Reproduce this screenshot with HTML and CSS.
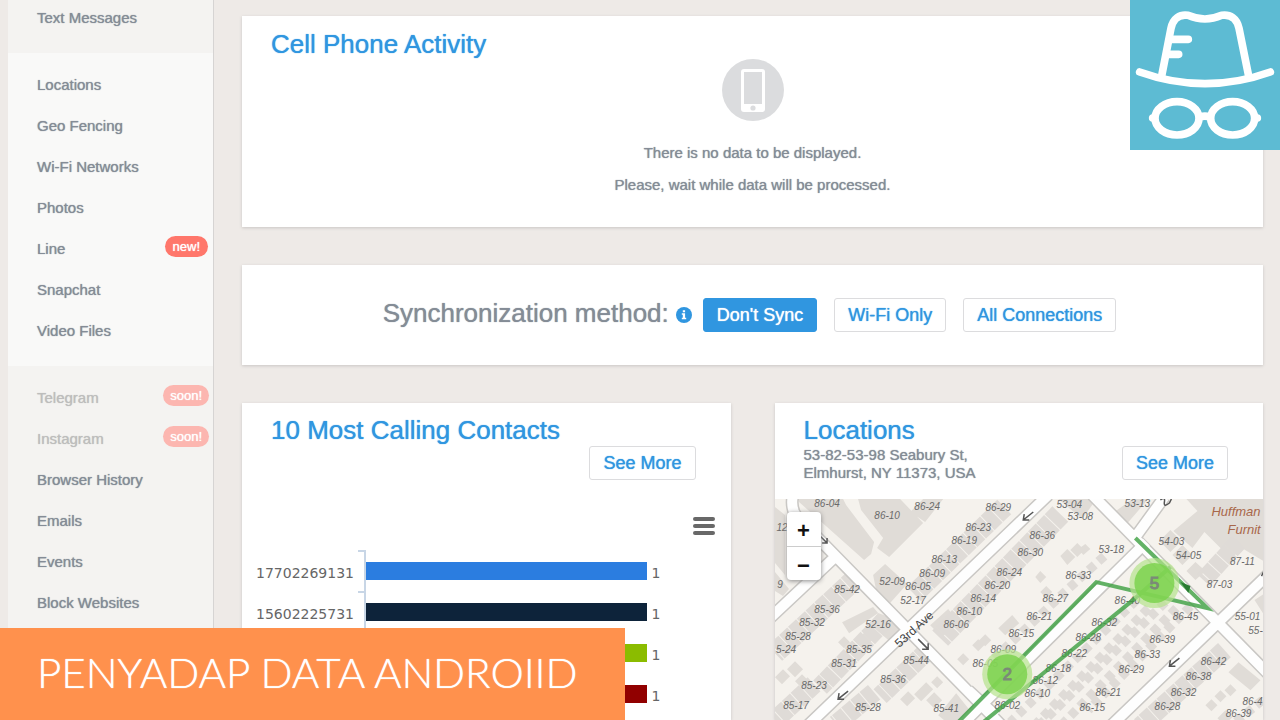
FILE: index.html
```html
<!DOCTYPE html>
<html lang="en">
<head>
<meta charset="utf-8">
<title>Cell Phone Activity</title>
<link rel="stylesheet" href="styles.css">
</head>
<body>
<div class="shell">
  <nav class="sidebar">
    <ul class="nav-group nav-group-top">
      <li><a class="nav-link" href="#">Text Messages</a></li>
    </ul>
    <ul class="nav-group nav-group-light">
      <li><a class="nav-link" href="#">Locations</a></li>
      <li><a class="nav-link" href="#">Geo Fencing</a></li>
      <li><a class="nav-link" href="#">Wi-Fi Networks</a></li>
      <li><a class="nav-link" href="#">Photos</a></li>
      <li><a class="nav-link" href="#">Line <span class="badge">new!</span></a></li>
      <li><a class="nav-link" href="#">Snapchat</a></li>
      <li><a class="nav-link" href="#">Video Files</a></li>
    </ul>
    <ul class="nav-group">
      <li><a class="nav-link nav-link-soon" href="#">Telegram <span class="badge badge-soon">soon!</span></a></li>
      <li><a class="nav-link nav-link-soon" href="#">Instagram <span class="badge badge-soon">soon!</span></a></li>
      <li><a class="nav-link" href="#">Browser History</a></li>
      <li><a class="nav-link" href="#">Emails</a></li>
      <li><a class="nav-link" href="#">Events</a></li>
      <li><a class="nav-link" href="#">Block Websites</a></li>
    </ul>
  </nav>

  <main class="main">
    <section class="card activity">
      <h2 class="title">Cell Phone Activity</h2>
      <div class="empty">
        <svg class="empty-icon" viewBox="0 0 62 62" aria-hidden="true">
          <circle cx="31" cy="31" r="31" fill="#dbdcde"/>
          <rect x="19" y="10" width="24" height="43" rx="3" fill="#fff"/>
          <rect x="22" y="13" width="18" height="32" fill="#dbdcde"/>
          <circle cx="31" cy="49" r="2.6" fill="#dbdcde"/>
        </svg>
        <p>There is no data to be displayed.</p>
        <p>Please, wait while data will be processed.</p>
      </div>
    </section>

    <section class="card sync">
      <h2 class="sync-title">Synchronization method:</h2>
      <svg class="info" viewBox="0 0 16 16" aria-hidden="true">
        <circle cx="8" cy="8" r="8" fill="#3096e0"/>
        <path d="M6.8 3.2h2.3v2H6.8zM5.8 6.3h3.3v4.5h1.1v1.5H5.8v-1.5h1V7.8h-1z" fill="#fff"/>
      </svg>
      <div class="sync-options">
        <button class="btn btn-primary" type="button">Don't Sync</button>
        <button class="btn" type="button">Wi-Fi Only</button>
        <button class="btn" type="button">All Connections</button>
      </div>
    </section>

    <div class="columns">
      <section class="card contacts">
        <h2 class="title">10 Most Calling Contacts</h2>
        <button class="btn contacts-more" type="button">See More</button>
        <button class="menu" type="button" aria-label="Chart menu"><span></span><span></span><span></span></button>
        <ul class="chart">
          <li class="chart-row"><span class="chart-label">17702269131</span><span class="tick"></span><span class="bar bar-blue"></span><span class="value">1</span></li>
          <li class="chart-row"><span class="chart-label">15602225731</span><span class="tick"></span><span class="bar bar-navy"></span><span class="value">1</span></li>
          <li class="chart-row"><span class="chart-label"></span><span class="tick"></span><span class="bar bar-green"></span><span class="value">1</span></li>
          <li class="chart-row"><span class="chart-label"></span><span class="tick"></span><span class="bar bar-red"></span><span class="value">1</span></li>
        </ul>
      </section>

      <section class="card locations">
        <h2 class="title">Locations</h2>
        <div class="place">
          <p class="address">53-82-53-98 Seabury St,<br>Elmhurst, NY 11373, USA</p>
          <button class="btn" type="button">See More</button>
        </div>
        <div class="map">
          <svg class="map-art" viewBox="775 499 488 221" preserveAspectRatio="xMinYMin slice" role="img" aria-label="Street map">
            <rect x="775" y="499" width="488" height="221" fill="#f5f2ed"/>
            <g class="blocks">
              <path d="M798 499h45l3 6 28 37-3 12-7 6-65-58zM858 499h42l23 24-34 34-12-9 6-10-22-28zM910 512l13-13h20l-18 23zM775 507l10 8v60l-10-12zM775 572l14 17-6 7-8-5zM873 575l12-11 22 20-17 19-14-13zM842 622l31-15 5 6-29 20zM860 636l12-10 20 17 14-12-6-10-22-8-10 12 10 8-14 16zM1186 499h77v62l-20-12-13 9-26-26-12 16-19-17 24-20zM1110 515l22-16h16l-26 30zM1058 499h38l-14 20zM1159 541l11-11 11 11-11 11zM1172 555l10-10 10 10-10 10zM1186 571l9-9 10 9-10 9zM1254 600l9-6v20zM930 625l12 12 16-16-10-12zM1228 672l10-10 22 18-10 10zM938 715l18-22 16 20-8 7h-20z"/>
              <path d="M775 677l8-8 7 7-8 8zM787 669l8-8 8 8-8 8zM795 681l7-7 7 7-7 7zM838 642l6-6 6 6-6 6zM900 699l8-8 7 7-8 8zM914 694l12-12 7 7-12 12zM926 700l8-8 8 8-8 8zM1060 556l7-7 8 8-8 8zM1070 550l7-7 7 7-7 7zM1078 549l7-5 5 5-7 6zM1035 577l5-6 6 6-6 6zM1040 592l6-6 6 6-6 6zM998 628l14-13 7 8-14 12zM957 659l6-6 6 6-6 6zM972 645l6-6 6 6-6 6zM979 640l6-6 6 6-6 6zM931 682l6-6 6 6-6 6zM1217 718l8-8 7 7-8 8zM1205 705l6-6 6 6-6 6zM1214 696l6-6 6 6-6 6zM1224 690l6-6 6 6-6 6z"/>
            </g>
            <g class="rows">
              <path d="M1004 507L914 594" stroke-width="20"/>
              <path d="M1060 514L940 638" stroke-width="22"/>
              <path d="M856 578L775 653" stroke-width="21"/>
              <path d="M884 621L820 687M814 684L775 720" stroke-width="19"/>
              <path d="M928 650L880 696M874 692L836 724" stroke-width="19"/>
              <path d="M1224 650L1140 726" stroke-width="19"/>
              <path d="M1238 542L1203 580" stroke-width="18"/>
            </g>
            <g class="rows rows-small">
              <path d="M1104 556L1060 596M1056 600L994 658M1190 606L1088 710M1165 602L1040 724M1136 600L1010 722M1148 608L1016 744M1176 608L1060 726M1262 700L1230 726" stroke-width="9"/>
            </g>
            <g class="road-edge">
              <path d="M793 495C789 514 799 519 812 532L1004 728M808 725L1048 495M770 618L837 555M1092 495L1268 674M1164 497L1135 537M1146 542L958 728M1268 574L1108 728M968 690L996 716"/>
            </g>
            <g class="road">
              <path d="M793 495C789 514 799 519 812 532L1004 728M808 725L1048 495M770 618L837 555M1092 495L1268 674M1164 497L1135 537M1146 542L958 728M1268 574L1108 728M968 690L996 716"/>
            </g>
            <g class="arrows">
              <path d="M820 536l7 7m0-5v5h-5M918 639l10 10m0-6v6h-6M848 691l-10 8m1-6l-1 6h6M1033 512l-10 8m1-6l-1 6h6M1179 658l-10 8m1-6l-1 6h6M1263 572l-2 4"/>
              <path d="M1160 500q5-4 4 2t5 1l2-4"/>
            </g>
            <g class="numbers">
              <text x="827" y="507">86-04</text><text x="887" y="519">86-10</text><text x="927" y="510">86-24</text><text x="782" y="531">12</text><text x="780" y="588">9</text>
              <text x="932" y="577">86-09</text><text x="892" y="585">52-09</text><text x="918" y="590">86-05</text><text x="913" y="604">52-17</text><text x="847" y="593">85-42</text>
              <text x="827" y="613">85-36</text><text x="812" y="626">85-32</text><text x="798" y="640">85-28</text><text x="878" y="628">52-16</text><text x="786" y="653">5-24</text>
              <text x="859" y="653">85-35</text><text x="844" y="667">85-31</text><text x="814" y="689">85-23</text><text x="796" y="709">85-17</text><text x="916" y="664">85-44</text>
              <text x="893" y="683">85-36</text><text x="868" y="711">85-28</text><text x="998" y="511">86-29</text><text x="1069" y="508">53-04</text><text x="1080" y="520">53-08</text>
              <text x="978" y="531">86-23</text><text x="964" y="544">86-19</text><text x="944" y="563">86-13</text><text x="1042" y="539">86-36</text><text x="1030" y="556">86-30</text>
              <text x="1009" y="576">86-24</text><text x="997" y="589">86-20</text><text x="983" y="602">86-14</text><text x="969" y="615">86-10</text><text x="956" y="628">86-06</text>
              <text x="1078" y="579">86-33</text><text x="1055" y="602">86-27</text><text x="1039" y="620">86-21</text><text x="1021" y="637">86-15</text><text x="1003" y="653">86-09</text>
              <text x="985" y="667">86-05</text><text x="1088" y="641">86-28</text><text x="1074" y="657">86-22</text><text x="1058" y="672">86-18</text><text x="1045" y="684">86-12</text>
              <text x="1037" y="697">86-10</text><text x="1007" y="709">86-02</text><text x="946" y="712">85-41</text><text x="1092" y="711">86-15</text><text x="1137" y="507">53-13</text>
              <text x="1111" y="553">53-18</text><text x="1171" y="545">54-03</text><text x="1188" y="559">54-05</text><text x="1242" y="565">87-11</text><text x="1219" y="588">87-03</text>
              <text x="1185" y="620">86-45</text><text x="1127" y="604">86-40</text><text x="1104" y="626">86-32</text><text x="1162" y="643">86-39</text><text x="1147" y="658">86-33</text>
              <text x="1131" y="673">86-29</text><text x="1108" y="696">86-21</text><text x="1247" y="620">55-01</text><text x="1255" y="634">55-</text><text x="1213" y="665">86-42</text>
              <text x="1198" y="680">86-38</text><text x="1183" y="696">86-32</text><text x="1167" y="710">86-28</text><text x="1252" y="705">86-4</text><text x="1238" y="717">86-39</text>
            </g>
            <text class="street" x="914" y="629" transform="rotate(-42 914 629)" dy="4">53rd Ave</text>
            <g class="shop"><text x="1211" y="516">Huffman</text><text x="1227" y="534">Furnit</text></g>
            <path class="route" d="M1135 538L1207 608L1096 582L958 722M983 722L1135 598L1170 567"/>
            <path d="M1180 582l10 4-2 7z" fill="#2a7b33"/>
            <g class="clusters">
              <circle cx="1154" cy="583" r="25" fill="#b5e28c" fill-opacity=".7"/><circle cx="1154" cy="583" r="20" fill="#78d248" fill-opacity=".8"/>
              <circle cx="1007" cy="674" r="25" fill="#b5e28c" fill-opacity=".7"/><circle cx="1007" cy="674" r="20" fill="#78d248" fill-opacity=".8"/>
              <text x="1154" y="589">5</text><text x="1007" y="680">2</text>
            </g>
          </svg>
          <div class="zoom">
            <button type="button" aria-label="Zoom in">+</button>
            <button type="button" aria-label="Zoom out">−</button>
          </div>
        </div>
      </section>
    </div>
  </main>

  <div class="logo">
    <svg viewBox="90 0 450 450" role="img" aria-label="Hat and glasses">
      <g fill="none" stroke="#fff" stroke-width="23" stroke-linecap="round" stroke-linejoin="round">
        <path d="M119 216Q315 286 511 216"/>
        <path d="M185 228L213 85C219 55 240 42 264 46Q315 68 365 46C390 42 411 55 417 85L446 228" stroke-linecap="butt"/>
        <path d="M216 118H265M208 163H236"/>
        <ellipse cx="231" cy="355" rx="66" ry="50"/>
        <ellipse cx="398" cy="355" rx="66" ry="50"/>
        <path d="M300 350Q315 347 329 350M158 354h2M470 354h2"/>
      </g>
    </svg>
  </div>
  <h1 class="banner">PENYADAP DATA ANDROIID</h1>
</div>
</body>
</html>
```
FILE: styles.css
```css
* {
  box-sizing: border-box;
}

body {
  margin: 0;
  background: #eeeae7;
  color: #848c96;
  font: 15px/32px "Liberation Sans", Arial, sans-serif;
}

h1, h2, p, ul {
  margin: 0;
  padding: 0;
  font-weight: 400;
}

ul {
  list-style: none;
}

button {
  font-family: inherit;
  cursor: pointer;
}

.shell {
  position: relative;
  display: flex;
  min-height: 100vh;
  overflow: hidden;
}

.nav-link,
.title,
.sync-title,
.empty p,
.address,
.btn,
.banner {
  text-shadow: 0 0 1px currentColor;
}

/* Sidebar */
.sidebar {
  flex: none;
  width: 206px;
  margin-left: 8px;
  background: #f4f3f1;
  border-right: 1px solid #d6d4d3;
}

.nav-group {
  padding: 11px 0 15px;
}

.nav-group-top {
  padding: 0 0 17px;
}

.nav-group-light {
  background: #f9f9f8;
}

.nav-link {
  display: flex;
  justify-content: space-between;
  align-items: center;
  height: 41px;
  padding: 0 5px 0 29px;
  color: #848c96;
  text-decoration: none;
}

.nav-group-top .nav-link {
  height: 36px;
}

.nav-link-soon {
  padding-right: 4px;
  color: #bdbdbc;
}

.badge {
  margin-bottom: 4px;
  padding: 0 8px;
  border-radius: 11px;
  background: #ff776b;
  color: #fff;
  font-size: 13px;
  line-height: 21px;
}

.badge-soon {
  padding: 0 7px;
  background: #fcb6b0;
}

/* Content */
.main {
  flex: 1;
  display: flex;
  flex-direction: column;
  gap: 38px;
  min-width: 0;
  padding: 16px 17px 0 28px;
}

.card {
  background: #fff;
  box-shadow: 0 1px 3px #c9c5c4;
}

.title {
  padding-left: 29px;
  color: #3096e0;
  font-size: 26px;
  line-height: 30px;
}

.activity {
  padding: 13px 0 26px;
}

.empty {
  display: flex;
  flex-direction: column;
  align-items: center;
}

.empty-icon {
  width: 62px;
  height: 62px;
  margin-bottom: 16px;
}

.sync {
  display: flex;
  align-items: center;
  justify-content: center;
  padding: 33px 6px 33px 0;
}

.sync-title {
  font-size: 26px;
  line-height: 30px;
  padding-bottom: 4px;
}

.info {
  width: 16px;
  height: 16px;
  margin: 0 11px 0 7px;
}

.sync-options {
  display: flex;
  gap: 17px;
}

.btn {
  height: 34px;
  padding: 0 13px;
  border: 1px solid #dcdcde;
  border-radius: 3px;
  background: #fff;
  color: #3096e0;
  font-size: 18px;
}

.btn-primary {
  border-color: #3096e0;
  background: #3096e0;
  color: #fff;
}

.columns {
  flex: 1;
  display: grid;
  grid-template-columns: 1fr 1fr;
  gap: 44px;
}

.contacts,
.locations {
  display: flex;
  flex-direction: column;
  padding-top: 12px;
}

.contacts-more {
  align-self: flex-end;
  margin: 1px 35px 37px 0;
}

.menu {
  align-self: flex-end;
  display: flex;
  flex-direction: column;
  justify-content: space-between;
  width: 22px;
  height: 18px;
  margin: 0 16px 15px 0;
  padding: 0;
  border: 0;
  background: none;
}

.menu span {
  height: 4px;
  border-radius: 2px;
  background: #686868;
}

/* Bar chart */
.chart {
  color: #666;
  font: 14px/41px "DejaVu Sans", sans-serif;
}

.chart-row {
  display: grid;
  grid-template-columns: 112px 12px 1fr 84px;
  height: 41px;
}

.chart-label {
  padding-top: 3px;
  text-align: right;
}

.tick {
  margin-left: 4px;
  border-top: 2px solid #c8d6e6;
  border-right: 2px solid #c8d6e6;
}

.bar {
  height: 18px;
  margin-top: 12px;
}

.bar-blue { background: #2b7de0; }
.bar-navy { background: #0d233a; }
.bar-green { background: #8bbc00; }
.bar-red { background: #910000; }

.value {
  padding: 3px 0 0 5px;
}

/* Locations */
.place {
  display: flex;
  justify-content: space-between;
  padding: 1px 35px 17px 29px;
}

.address {
  font-size: 15px;
  line-height: 18px;
}

.map {
  position: relative;
  flex: 1;
  min-height: 220px;
  overflow: hidden;
}

.map-art {
  display: block;
  width: 100%;
  height: 100%;
}

.blocks {
  fill: #e0dcd7;
}

.rows {
  fill: none;
  stroke: #dfdbd7;
  stroke-dasharray: 11 1;
}

.rows-small {
  stroke-dasharray: 8 5;
}

.road,
.road-edge {
  fill: none;
  stroke: #fefefe;
  stroke-width: 10;
}

.road-edge {
  stroke: #c9c7c4;
  stroke-width: 13;
}

.arrows {
  fill: none;
  stroke: #555;
  stroke-width: 1.5;
}

.numbers {
  fill: #6a6a6a;
  font-size: 10px;
  font-style: italic;
  text-anchor: middle;
}

.street {
  fill: #444;
  font-size: 12px;
  text-anchor: middle;
}

.shop {
  fill: #a8674a;
  font-size: 13px;
  font-style: italic;
}

.route {
  fill: none;
  stroke: #3c9f40;
  stroke-opacity: .8;
  stroke-width: 4;
}

.clusters text {
  fill: #7b8a78;
  font-size: 17px;
  text-anchor: middle;
  stroke: #7b8a78;
}

.zoom {
  position: absolute;
  top: 13px;
  left: 12px;
  display: flex;
  flex-direction: column;
  width: 34px;
  border-radius: 4px;
  background: #fff;
  box-shadow: 0 1px 5px #888;
}

.zoom button {
  height: 34px;
  padding: 4px 0 0;
  border: 0;
  background: none;
  color: #111;
  font-size: 22px;
  font-weight: 700;
}

.zoom button + button {
  border-top: 1px solid #ccc;
}

/* Overlays */
.logo {
  position: absolute;
  top: 0;
  right: 0;
  width: 150px;
  height: 150px;
  background: #5dbbd3;
}

.logo svg {
  display: block;
}

.banner {
  position: absolute;
  bottom: 0;
  left: 0;
  padding: 0 48px 4px 37px;
  background: #ff914d;
  color: #fff;
  font: 300 42px/88px Lato, sans-serif;
  white-space: nowrap;
}
```
